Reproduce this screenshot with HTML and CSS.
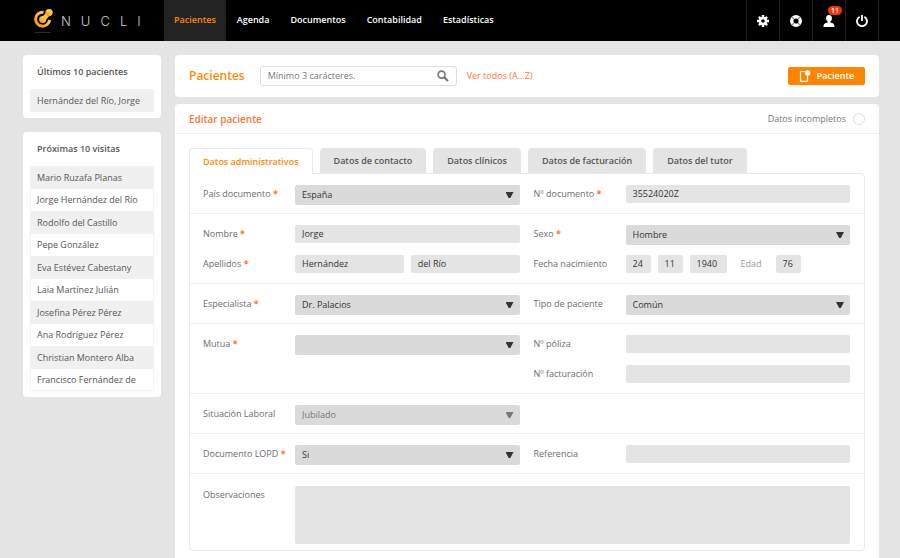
FILE: index.html
```html
<!DOCTYPE html>
<html lang="es">
<head>
  <meta charset="UTF-8">
  <meta name="viewport" content="width=device-width, initial-scale=1.0">
  <title>Nucli - Pacientes</title>
  <link rel="stylesheet" href="styles.css">
</head>
<body>
  <header class="topbar">
    <a href="#" class="logo">
      <svg class="logo-icon" width="20" height="26" viewBox="0 0 20 26" aria-hidden="true">
        <defs>
          <linearGradient id="gold" x1="1" y1="0" x2="0" y2="1">
            <stop offset="0" stop-color="#ffe45c"/>
            <stop offset="0.5" stop-color="#fdb83a"/>
            <stop offset="1" stop-color="#f08a1c"/>
          </linearGradient>
        </defs>
        <path d="M9.5 4.2A7 7 0 1 0 15.6 12" fill="none" stroke="url(#gold)" stroke-width="3"/>
        <circle cx="8.6" cy="11.4" r="3.5" fill="url(#gold)"/>
        <path d="M8 9L13 4L16 7L11 13Z" fill="#fcc440"/>
        <circle cx="15" cy="4.6" r="3.7" fill="url(#gold)"/>
        <path d="M1 24.5H17" stroke="#2a2a2a" stroke-width="1"/>
      </svg>
      <span class="logo-text">NUCLI</span>
    </a>
    <nav class="menu">
      <a href="#" class="active">Pacientes</a>
      <a href="#">Agenda</a>
      <a href="#">Documentos</a>
      <a href="#">Contabilidad</a>
      <a href="#">Estadísticas</a>
    </nav>
    <div class="tools">
      <button type="button" aria-label="Ajustes">
        <svg width="12" height="12" viewBox="0 0 12 12">
          <g stroke="#fff" stroke-width="2.4">
            <path d="M6 0V3M6 9V12M0 6H3M9 6H12"/>
            <path d="M1.9 1.9L4 4M8 8L10.1 10.1M1.9 10.1L4 8M8 4L10.1 1.9"/>
          </g>
          <circle cx="6" cy="6" r="3" fill="none" stroke="#fff" stroke-width="2.4"/>
        </svg>
      </button>
      <button type="button" aria-label="Ayuda">
        <svg width="12" height="12" viewBox="0 0 12 12">
          <circle cx="6" cy="6" r="4.3" fill="none" stroke="#fff" stroke-width="3.4"/>
          <path d="M2 2L4.2 4.2M7.8 7.8L10 10M2 10L4.2 7.8M7.8 4.2L10 2" stroke="#888" stroke-width="1.2"/>
        </svg>
      </button>
      <button type="button" aria-label="Usuario">
        <svg width="12" height="12" viewBox="0 0 12 12">
          <ellipse cx="6" cy="3.2" rx="2.9" ry="3.2" fill="#fff"/>
          <path d="M4.6 5H7.4V7.6C9.8 8 11.5 8.8 11.5 12H.5C.5 8.8 2.2 8 4.6 7.6Z" fill="#fff"/>
        </svg>
        <span class="badge">11</span>
      </button>
      <button type="button" aria-label="Salir">
        <svg width="12" height="12" viewBox="0 0 12 12" fill="none" stroke="#fff" stroke-width="1.8">
          <path d="M3.6 1.8A5 5 0 1 0 8.4 1.8"/>
          <path d="M6 0V6"/>
        </svg>
      </button>
    </div>
  </header>

  <div class="layout">
    <aside class="sidebar">
      <section class="card side-card">
        <h2>Últimos 10 pacientes</h2>
        <ul>
          <li><a href="#">Hernández del Río, Jorge</a></li>
        </ul>
      </section>
      <section class="card side-card">
        <h2>Próximas 10 visitas</h2>
        <ul>
          <li><a href="#">Mario Ruzafa Planas</a></li>
          <li><a href="#">Jorge Hernández del Río</a></li>
          <li><a href="#">Rodolfo del Castillo</a></li>
          <li><a href="#">Pepe González</a></li>
          <li><a href="#">Eva Estévez Cabestany</a></li>
          <li><a href="#">Laia Martínez Julián</a></li>
          <li><a href="#">Josefina Pérez Pérez</a></li>
          <li><a href="#">Ana Rodríguez Pérez</a></li>
          <li><a href="#">Christian Montero Alba</a></li>
          <li><a href="#">Francisco Fernández de</a></li>
        </ul>
      </section>
    </aside>

    <main class="content">
      <section class="card searchbar">
        <h1>Pacientes</h1>
        <form class="search">
          <input type="text" name="q" aria-label="Buscar paciente" placeholder="Mínimo 3 carácteres.">
          <button type="submit" aria-label="Buscar">
            <svg width="12" height="12" viewBox="0 0 12 12" fill="none" stroke="#777">
              <circle cx="4.6" cy="4.6" r="3.5" stroke-width="1.6"/>
              <path d="M7.2 7.2L11 11" stroke-width="2.2"/>
            </svg>
          </button>
        </form>
        <a href="#" class="view-all">Ver todos (A...Z)</a>
        <button type="button" class="btn-new">
          <svg width="12" height="12" viewBox="0 0 12 12">
            <path d="M7 1.5H1.5V11.3H8.5V6" fill="none" stroke="#fff" stroke-width="1.2"/>
            <circle cx="8.6" cy="3" r="2.8" fill="#fff"/>
          </svg>
          Paciente
        </button>
      </section>

      <section class="card editor">
        <div class="editor-head">
          <h2>Editar paciente</h2>
          <label class="incomplete">Datos incompletos <input type="checkbox" name="incompletos"></label>
        </div>

        <div class="tabs">
          <button type="button" class="active">Datos administrativos</button>
          <button type="button">Datos de contacto</button>
          <button type="button">Datos clínicos</button>
          <button type="button">Datos de facturación</button>
          <button type="button">Datos del tutor</button>
        </div>

        <form class="panel">
          <div class="row">
            <div class="field">
              <label for="pais">País documento <b>*</b></label>
              <div class="select"><select id="pais"><option>España</option></select></div>
            </div>
            <div class="field">
              <label for="documento">Nº documento <b>*</b></label>
              <input type="text" id="documento" value="35524020Z">
            </div>
          </div>

          <div class="row">
            <div class="field">
              <label for="nombre">Nombre <b>*</b></label>
              <input type="text" id="nombre" value="Jorge">
            </div>
            <div class="field">
              <label for="sexo">Sexo <b>*</b></label>
              <div class="select"><select id="sexo"><option>Hombre</option></select></div>
            </div>
            <div class="field">
              <label for="apellido1">Apellidos <b>*</b></label>
              <div class="group">
                <input type="text" id="apellido1" value="Hernández">
                <input type="text" aria-label="Segundo apellido" value="del Río">
              </div>
            </div>
            <div class="field">
              <label for="dia">Fecha nacimiento</label>
              <div class="group">
                <input type="text" class="short" id="dia" value="24">
                <input type="text" class="short" aria-label="Mes" value="11">
                <input type="text" class="year" aria-label="Año" value="1940">
                <label for="edad" class="age">Edad</label>
                <input type="text" class="short" id="edad" value="76">
              </div>
            </div>
          </div>

          <div class="row">
            <div class="field">
              <label for="especialista">Especialista <b>*</b></label>
              <div class="select"><select id="especialista"><option>Dr. Palacios</option></select></div>
            </div>
            <div class="field">
              <label for="tipo">Tipo de paciente</label>
              <div class="select"><select id="tipo"><option>Común</option></select></div>
            </div>
          </div>

          <div class="row">
            <div class="field">
              <label for="mutua">Mutua <b>*</b></label>
              <div class="select"><select id="mutua"><option></option></select></div>
            </div>
            <div class="field">
              <label for="poliza">Nº póliza</label>
              <input type="text" id="poliza">
            </div>
            <div class="field right">
              <label for="facturacion">Nº facturación</label>
              <input type="text" id="facturacion">
            </div>
          </div>

          <div class="row">
            <div class="field">
              <label for="laboral">Situación Laboral</label>
              <div class="select disabled"><select id="laboral" disabled><option>Jubilado</option></select></div>
            </div>
          </div>

          <div class="row">
            <div class="field">
              <label for="lopd">Documento LOPD <b>*</b></label>
              <div class="select"><select id="lopd"><option>Si</option></select></div>
            </div>
            <div class="field">
              <label for="referencia">Referencia</label>
              <input type="text" id="referencia">
            </div>
          </div>

          <div class="row notes">
            <div class="field wide">
              <label for="observaciones">Observaciones</label>
              <textarea id="observaciones"></textarea>
            </div>
          </div>
        </form>
      </section>
    </main>
  </div>
</body>
</html>
```

FILE: styles.css
```css
* {
  box-sizing: border-box;
}

body {
  margin: 0;
  min-height: 100vh;
  display: flex;
  flex-direction: column;
  background: #e4e4e4;
  color: #555;
  font-family: "Open Sans", "Noto Sans", sans-serif;
  font-size: 9px;
  line-height: 18px;
}

h1, h2, ul {
  margin: 0;
  padding: 0;
}

a {
  color: inherit;
  text-decoration: none;
}

button, input, select, textarea {
  margin: 0;
  font: inherit;
  color: inherit;
}

button {
  padding: 0;
  border: none;
  background: none;
  cursor: pointer;
}

/* Top bar */
.topbar {
  display: flex;
  height: 41px;
  padding-right: 21px;
  background: #000;
  color: #fff;
}

.logo {
  display: flex;
  align-items: center;
  gap: 7px;
  width: 164px;
  padding-left: 34px;
  overflow: hidden;
}

.logo-text {
  font-family: Inter, sans-serif;
  font-size: 13px;
  font-weight: 300;
  letter-spacing: 10px;
  color: #ccc;
}

.menu {
  display: flex;
  gap: 1px;
  font-weight: 600;
}

.menu a {
  padding: 0 10px;
  line-height: 40px;
}

.menu .active {
  background: #222;
  color: #ff8a00;
}

.tools {
  display: flex;
  margin-left: auto;
  border-right: 1px solid #222;
}

.tools button {
  position: relative;
  display: flex;
  align-items: center;
  justify-content: center;
  width: 33px;
  border-left: 1px solid #222;
}

.badge {
  position: absolute;
  top: 6px;
  right: 3px;
  width: 14px;
  border-radius: 5px;
  background: #f4330c;
  color: #fff;
  font-size: 7px;
  font-weight: 600;
  line-height: 9px;
}

/* Layout */
.layout {
  flex: 1;
  display: flex;
  gap: 14px;
  padding: 14px 21px 0 23px;
}

.card {
  border-radius: 4px;
  background: #fff;
}

.sidebar {
  width: 138px;
}

.side-card {
  margin-bottom: 14px;
  padding: 8px 7px 6px;
}

.side-card h2 {
  padding: 0 7px 8px;
  font-size: 9px;
  font-weight: 600;
}

.side-card ul {
  list-style: none;
  box-shadow: inset 0 0 0 1px #f4f4f4;
}

.side-card li {
  padding: 0 7px;
  line-height: 22px;
  white-space: nowrap;
  overflow: hidden;
}

.side-card li:nth-child(odd) {
  background: #f0f0f0;
  line-height: 23px;
}

.content {
  flex: 1;
  display: flex;
  flex-direction: column;
  gap: 7px;
}

/* Search */
.searchbar {
  display: flex;
  align-items: center;
  padding: 11px 14px;
}

.searchbar h1 {
  color: #ff8a00;
  font-size: 12px;
  font-weight: 600;
}

.search {
  display: flex;
  width: 197px;
  height: 20px;
  margin: 0 10px 0 15px;
  padding: 0 7px;
  border: 1px solid #ddd;
  border-radius: 3px;
}

.search input {
  flex: 1;
  min-width: 0;
  padding: 0;
  border: none;
  outline: none;
}

.search input::placeholder {
  color: #777;
}

.search button {
  display: flex;
  align-items: center;
}

.view-all {
  color: #ff7430;
}

.btn-new {
  display: flex;
  align-items: center;
  justify-content: center;
  gap: 6px;
  width: 77px;
  height: 18px;
  margin-left: auto;
  border-radius: 2px;
  background: #ff8500;
  color: #fff;
  font-weight: 600;
}

/* Editor */
.editor {
  flex: 1;
  padding-bottom: 7px;
  border-radius: 4px 4px 0 0;
}

.editor-head {
  display: flex;
  align-items: center;
  justify-content: space-between;
  height: 30px;
  padding: 0 14px;
  border-bottom: 1px solid #eee;
}

.editor-head h2 {
  color: #ff7430;
  font-size: 10px;
  font-weight: 600;
}

.incomplete {
  display: flex;
  align-items: center;
  gap: 7px;
  color: #777;
}

.incomplete input {
  appearance: none;
  width: 12px;
  height: 12px;
  border: 1px solid #ddd;
  border-radius: 50%;
}

.incomplete input:checked {
  background: #ff8500;
}

.tabs {
  display: flex;
  gap: 7px;
  padding: 14px 14px 0;
}

.tabs button {
  height: 25px;
  padding: 0 14px;
  border-radius: 4px 4px 0 0;
  background: #e4e4e4;
  font-weight: 600;
}

.tabs .active {
  height: 26px;
  margin-bottom: -1px;
  padding: 0 13px;
  border: 1px solid #e8e8e8;
  border-bottom: none;
  background: #fff;
  color: #ff8a00;
}

.panel {
  margin: 0 14px;
  border: 1px solid #e8e8e8;
  border-radius: 0 4px 4px 4px;
}

.row {
  display: grid;
  grid-template-columns: 1fr 1fr;
  gap: 10px 14px;
  padding: 11px 14px 8px 13px;
  border-bottom: 1px solid #eee;
}

.row:last-child {
  border-bottom: none;
}

.field {
  display: grid;
  grid-template-columns: 92px 1fr;
  align-items: start;
  min-height: 20px;
}

.field.right {
  grid-column: 2;
}

.field.wide {
  grid-column: 1 / -1;
}

.field label {
  color: #6c6c6c;
  white-space: nowrap;
}

.field b {
  color: #ff7430;
}

.field input,
.field select,
.field textarea {
  display: block;
  width: 100%;
  min-width: 0;
  height: 18px;
  padding: 0 7px;
  border: none;
  border-radius: 2px;
  background: #e4e4e4;
  color: #333;
}

.select {
  position: relative;
}

.field select {
  appearance: none;
  height: 20px;
  background: #dadada;
}

/* drop-down arrow */
.select::after {
  content: "";
  position: absolute;
  top: 7px;
  right: 6px;
  width: 8px;
  height: 6px;
  background: #333;
  clip-path: polygon(0 0, 100% 0, 60% 100%, 40% 100%);
  pointer-events: none;
}

.field select:disabled {
  color: #777;
  opacity: 1;
}

.select.disabled::after {
  background: #777;
}

.group {
  display: flex;
  gap: 7px;
}

.field .short {
  width: 25px;
}

.field .year {
  width: 37px;
}

.field .age {
  padding: 0 7px;
  color: #999;
}

.row.notes {
  padding-top: 12px;
  padding-bottom: 6px;
}

.field textarea {
  height: 58px;
  resize: none;
}
```
